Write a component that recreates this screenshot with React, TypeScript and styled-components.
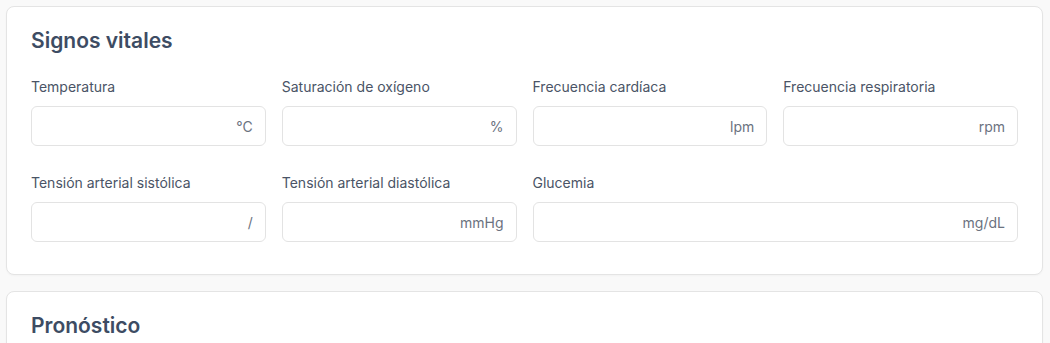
import React from "react";
import styled, { createGlobalStyle } from "styled-components";

const GlobalStyle = createGlobalStyle`
  * { box-sizing: border-box; }
  body {
    margin: 0;
    background: #f9f9f9;
    font-family: Inter, "Noto Sans", sans-serif;
  }
`;

const Page = styled.div`
  padding: 6px 7px 0 6px;
  display: flex;
  flex-direction: column;
  gap: 16px;
`;

const Card = styled.section`
  background: #ffffff;
  border: 1px solid #e4e4e4;
  border-radius: 8px;
  padding: 20px 24px 32px;
  box-shadow: 0 1px 2px rgba(0, 0, 0, 0.03);
`;

const Title = styled.h2`
  margin: 0 0 22px;
  font-size: 21px;
  line-height: 28px;
  font-weight: 600;
  color: #3d4c63;
`;

const Grid = styled.div`
  display: grid;
  grid-template-columns: repeat(4, minmax(0, 1fr));
  column-gap: 16px;
  row-gap: 27px;
`;

const Field = styled.div<{ $span?: number }>`
  display: flex;
  flex-direction: column;
  min-width: 0;
  grid-column: span ${(p) => p.$span ?? 1};
`;

const Label = styled.label`
  font-size: 14px;
  line-height: 20px;
  color: #4a5466;
  margin-bottom: 9px;
`;

const InputBox = styled.div`
  display: flex;
  align-items: center;
  height: 40px;
  border: 1px solid #e3e3e3;
  border-radius: 6px;
  background: #fff;
  padding: 0 12px;
`;

const Input = styled.input`
  flex: 1;
  width: 0;
  min-width: 0;
  border: none;
  outline: none;
  background: transparent;
  padding: 0;
  font: inherit;
  font-size: 14px;
  color: #333;
`;

const Unit = styled.span`
  font-size: 14px;
  color: #6b7280;
  margin-left: 8px;
`;

const fields: { label: string; unit: string; span?: number }[] = [
  { label: "Temperatura", unit: "°C" },
  { label: "Saturación de oxígeno", unit: "%" },
  { label: "Frecuencia cardíaca", unit: "lpm" },
  { label: "Frecuencia respiratoria", unit: "rpm" },
  { label: "Tensión arterial sistólica", unit: "/" },
  { label: "Tensión arterial diastólica", unit: "mmHg" },
  { label: "Glucemia", unit: "mg/dL", span: 2 },
];

export default function App() {
  return (
    <>
      <GlobalStyle />
      <Page>
        <Card>
          <Title>Signos vitales</Title>
          <Grid>
            {fields.map((f) => (
              <Field key={f.label} $span={f.span}>
                <Label>{f.label}</Label>
                <InputBox>
                  <Input type="text" />
                  <Unit>{f.unit}</Unit>
                </InputBox>
              </Field>
            ))}
          </Grid>
        </Card>
        <Card>
          <Title>Pronóstico</Title>
        </Card>
      </Page>
    </>
  );
}
